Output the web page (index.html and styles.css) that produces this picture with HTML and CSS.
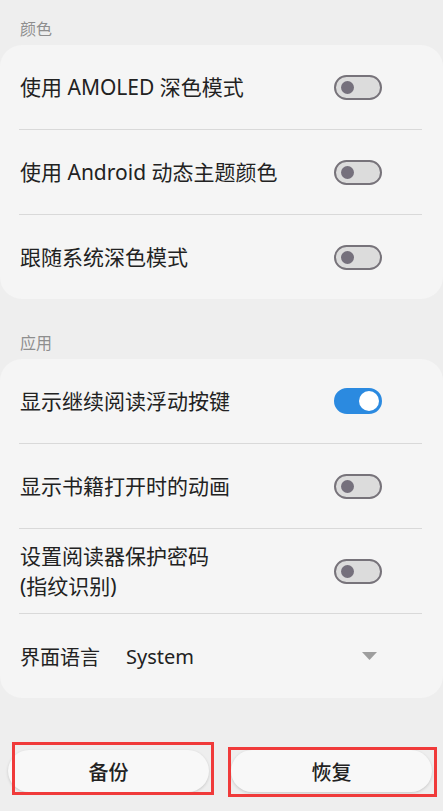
FILE: index.html
```html
<!DOCTYPE html>
<html lang="zh-CN">
<head>
    <meta charset="UTF-8">
    <meta name="viewport" content="width=device-width, initial-scale=1.0">
    <title>设置</title>
    <link rel="stylesheet" href="styles.css">
</head>
<body>
    <div class="page">
        <div class="section-title first">颜色</div>
        <div class="card">
            <div class="row">
                <span class="label">使用 AMOLED 深色模式</span>
                <span class="switch"><span class="thumb"></span></span>
            </div>
            <div class="row">
                <span class="label">使用 Android 动态主题颜色</span>
                <span class="switch"><span class="thumb"></span></span>
            </div>
            <div class="row">
                <span class="label">跟随系统深色模式</span>
                <span class="switch"><span class="thumb"></span></span>
            </div>
        </div>

        <div class="section-title">应用</div>
        <div class="card">
            <div class="row">
                <span class="label">显示继续阅读浮动按键</span>
                <span class="switch on"><span class="thumb"></span></span>
            </div>
            <div class="row">
                <span class="label">显示书籍打开时的动画</span>
                <span class="switch"><span class="thumb"></span></span>
            </div>
            <div class="row">
                <span class="label">设置阅读器保护密码<br>(指纹识别)</span>
                <span class="switch"><span class="thumb"></span></span>
            </div>
            <div class="row">
                <span class="lang-label">界面语言</span>
                <span class="lang-value">System</span>
                <svg class="dropdown" width="15" height="8" viewBox="0 0 15 8">
                    <polygon points="0,0 15,0 7.5,8" fill="#9e9e9e"/>
                </svg>
            </div>
        </div>

        <div class="actions">
            <button class="action">备份</button>
            <button class="action">恢复</button>
            <!-- highlight boxes drawn over the buttons -->
            <div class="mark mark-left"></div>
            <div class="mark mark-right"></div>
        </div>
    </div>
</body>
</html>
```

FILE: styles.css
```css
body {
    margin: 0;
    background-color: #eeeeee;
    font-family: "Noto Sans", "Noto Sans CJK SC", sans-serif;
    color: #222222;
}

.page {
    width: 443px;
    height: 811px;
    overflow: hidden;
}

.section-title {
    padding: 18px 20px 5px;
    margin-top: 15px;
    font-size: 16px;
    line-height: 22px;
    color: #8e8e8e;
}

.section-title.first {
    margin-top: 0;
}

.card {
    background: #f5f5f5;
    border-radius: 22px;
}

.row {
    display: flex;
    align-items: center;
    justify-content: space-between;
    height: 84px;
    margin: 0 21px 0 19px;
    padding: 0 40px 0 1px;
}

.row + .row {
    border-top: 1px solid #d9d9d9;
}

.label {
    font-size: 21px;
    line-height: 30px;
}

.switch {
    display: flex;
    align-items: center;
    box-sizing: border-box;
    width: 48px;
    height: 25px;
    padding: 0 5px;
    border: 2px solid #77737a;
    border-radius: 13px;
    background: #dcdcdc;
}

.thumb {
    width: 13px;
    height: 13px;
    border-radius: 50%;
    background: #75707c;
}

.switch.on {
    justify-content: flex-end;
    height: 26px;
    padding: 0 1px;
    border-color: #2b8ae0;
    background: #2b8ae0;
}

.switch.on .thumb {
    width: 20px;
    height: 20px;
    background: #ffffff;
}

.lang-label {
    font-size: 20px;
}

.lang-value {
    flex: 1;
    margin-left: 26px;
    font-size: 20px;
}

.dropdown {
    margin-right: 5px;
}

.actions {
    position: relative;
    display: flex;
    gap: 22px;
    margin-top: 52px;
    padding: 0 11px 0 8px;
}

.action {
    flex: 1;
    height: 42px;
    border: none;
    border-radius: 21px;
    background: #f8f8f8;
    box-shadow: 0 1px 3px rgba(0, 0, 0, 0.16);
    font-family: "Noto Sans", "Noto Sans CJK SC", sans-serif;
    font-size: 20px;
    font-weight: 500;
    color: #222222;
}

.mark {
    position: absolute;
    box-sizing: border-box;
    border: 3px solid #f03a3a;
}

.mark-left {
    left: 12px;
    top: -8px;
    width: 202px;
    height: 53px;
}

.mark-right {
    left: 228px;
    top: -3px;
    width: 209px;
    height: 50px;
}
```
